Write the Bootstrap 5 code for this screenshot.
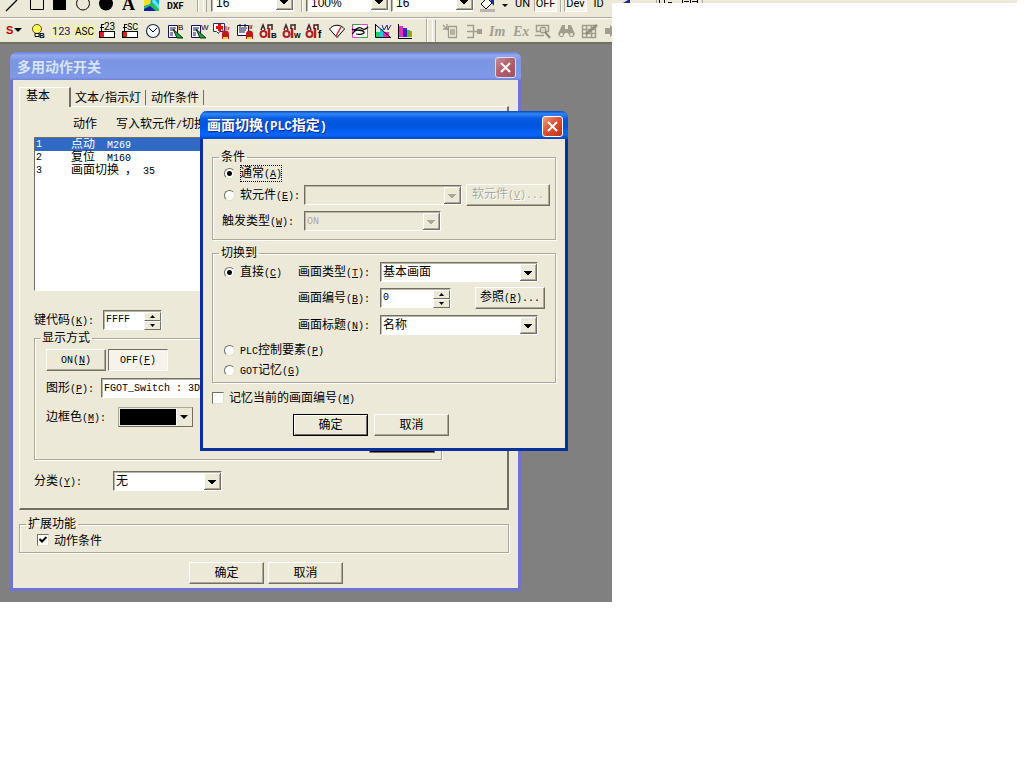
<!DOCTYPE html>
<html lang="zh-CN">
<head>
<meta charset="utf-8">
<meta name="viewport" content="width=device-width, initial-scale=1">
<title>多用动作开关</title>
<link href="https://cdn.jsdelivr.net/npm/bootstrap@5.3.0/dist/css/bootstrap.min.css" rel="stylesheet">
<style>
  :root { --face: #ece9d8; --edge: #716f64; --soft: #aca899; }
  body { background: #fff; color: #000; font: 12px/14px "Liberation Sans", "Noto Sans CJK SC", sans-serif; }
  .app { max-width: 612px; }
  .strip { height: 3px; background: var(--face); margin-right: 7px; overflow: hidden; }

  /* toolbars */
  .bar { background: var(--face); overflow: hidden; white-space: nowrap; }
  .bar-top { height: 17px; padding-bottom: 5px; }
  .bar-main { height: 27px; border-top: 1px solid var(--soft); box-shadow: inset 0 1px #fff; border-bottom: 2px solid #716f64; padding: 2px 0 0 4px; }
  .tool { width: 23px; height: 20px; padding: 0; border: 0; background: none; flex: none; line-height: 0; }
  .tool svg { width: 23px; height: 20px; }
  .word { border: 0; background: none; padding: 0; height: 20px; width: 23px; flex: none; font: 11px/24px Roboto, sans-serif; color: #000; }
  .word.on { background: #f6f5ee; border: 1px solid; border-color: var(--soft) #fff #fff var(--soft); line-height: 22px; }
  .grip { width: 4px; height: 22px; border-left: 1px solid #fff; border-right: 1px solid var(--soft); flex: none; }
  .rule { width: 2px; height: 24px; border-left: 1px solid var(--soft); border-right: 1px solid #fff; flex: none; }
  .bar-top .rule { margin: 0 3px 0 7px; }
  .bar-top .rule.far { margin: 0 4px 0 13px; }

  /* windows */
  .work { background: #808080; padding: 8px 10px 11px; }
  .win { background: var(--face); border: 3px solid; border-top: 0; border-radius: 7px 7px 0 0; }
  .win-back { border-color: #6c74cf; width: 511px; max-width: 100%; }
  .win-front { border-color: #0831a0; width: 368px; left: 200px; top: 111px; }
  .cap { height: 28px; margin: 0 -3px; padding: 0 5px 0 7px; border-radius: 7px 7px 0 0; color: #fff; }
  .cap h1 { font: bold 14px/20px "Liberation Mono", "Noto Sans CJK SC", monospace; margin: 0; padding-top: 3px; }
  .cap h1 .la { font-size: 12px; }
  .win-back .cap { background: linear-gradient(#6d80d8, #92a9ee 12%, #7b95e4 30%, #7b97e6 70%, #8199e8 90%, #6f83d6); color: #d8e4f8; }
  .win-front .cap { background: linear-gradient(#0848c0, #2f87f4 10%, #0558e2 28%, #0355e0 55%, #0666fa 85%, #0447c6); text-shadow: 1px 1px #0a2a80; }
  .shut { width: 21px; height: 21px; padding: 0; margin-top: 2px; border: 1px solid #fff; border-radius: 3px; background: linear-gradient(135deg, #f0a084, #dc5434 45%, #bd3212); line-height: 0; }
  .win-back .shut { background: linear-gradient(135deg, #c8909c, #b3606a 45%, #a05068); border-color: #d4dcf8; }

  /* text */
  .la, .fld, .spin input { font-family: "Liberation Mono", "Noto Sans CJK SC", monospace; }
  .la { font-size: 10px; }
  .win label, .win legend { font-weight: 400; line-height: 14px; white-space: nowrap; }
  .win label { padding-top: 1px; }

  /* controls */
  .fld { height: 20px; border: 1px solid; border-color: var(--edge) #fff #fff var(--edge); border-radius: 0; box-shadow: inset 1px 1px #b8b5a5; background: #fff; padding: 1px 2px 0; font-size: 12px; line-height: 16px; color: #000; }
  .fld.en, .spin input.en { font-size: 10px; }
  select.fld { appearance: none; background: #fff url("data:image/svg+xml,%3Csvg xmlns='http://www.w3.org/2000/svg' width='17' height='17' shape-rendering='crispEdges'%3E%3Cpath fill='%23716f64' d='M0 0h17v17H0z'/%3E%3Cpath fill='%23fff' d='M0 0h16v16H0z'/%3E%3Cpath fill='%23ece9d8' d='M1 1h15v15H1z'/%3E%3Cpath fill='%23aca899' d='M15 1h1v15H1v-1h14z'/%3E%3Cpath d='M4 7h8v1H4zM5 8h6v1H5zM6 9h4v1H6zM7 10h2v1H7z'/%3E%3C/svg%3E") no-repeat right 0 top 1px; }
  select.fld:disabled { opacity: 1; color: var(--soft); background: var(--face) url("data:image/svg+xml,%3Csvg xmlns='http://www.w3.org/2000/svg' width='17' height='17' shape-rendering='crispEdges'%3E%3Cpath fill='%23716f64' d='M0 0h17v17H0z'/%3E%3Cpath fill='%23fff' d='M0 0h16v16H0z'/%3E%3Cpath fill='%23ece9d8' d='M1 1h15v15H1z'/%3E%3Cpath fill='%23aca899' d='M15 1h1v15H1v-1h14zM4 7h8v1H4zM5 8h6v1H5zM6 9h4v1H6zM7 10h2v1H7z'/%3E%3C/svg%3E") no-repeat right 0 top 1px; }
  .bar select.fld { border-top: 0; flex: none; width: 83px; font: 12px/16px "Liberation Sans", sans-serif; padding: 2px 4px 0; }
  .spin { height: 20px; border: 1px solid; border-color: var(--edge) #fff #fff var(--edge); box-shadow: inset 1px 1px #b8b5a5; background: #fff; padding: 1px 0 0 1px; }
  .spin input { border: 0; background: none; padding: 0 1px; min-width: 0; font-size: 10px; line-height: 14px; height: 15px; }
  .spin button { width: 17px; height: 9px; padding: 0; border: 1px solid; border-color: #fff var(--edge) var(--edge) #fff; background: var(--face); line-height: 0; display: block; }
  .push { height: 22px; border: 1px solid; border-color: #fff var(--edge) var(--edge) #fff; box-shadow: inset -1px -1px var(--soft); border-radius: 0; background: var(--face); color: #000; padding: 0; font-size: 12px; line-height: 18px; white-space: nowrap; }
  .push-w { width: 75px; }
  .push.first { border-color: #000; box-shadow: inset 1px 1px #fff, inset -1px -1px var(--edge); }
  .push.down { border-color: var(--edge) #fff #fff var(--edge); box-shadow: none; background: #f5f3ea; }
  .push:disabled { color: var(--soft); text-shadow: 1px 1px #fff; }
  .swatch { width: 75px; height: 20px; border: 1px solid; border-color: var(--soft) var(--edge) var(--edge) var(--soft); background: var(--face); padding: 1px; }
  .swatch i { background: #000; }
  .win input[type=radio], .win input[type=checkbox] { appearance: none; flex: none; margin: 0; background: #fff; border: 1px solid; border-color: var(--edge) #e4e0cc #e4e0cc var(--edge); }
  .win input[type=radio] { width: 11px; height: 11px; border-radius: 50%; margin: 0 5px; }
  .win input[type=radio]:checked { background: #fff radial-gradient(circle, #000 2px, #fff 3px); }
  .win input[type=checkbox] { width: 12px; height: 12px; margin-right: 5px; }
  .win input[type=checkbox]:checked { background: #fff url("data:image/svg+xml,%3Csvg xmlns='http://www.w3.org/2000/svg' width='10' height='10'%3E%3Cpath fill='none' stroke='%23000' stroke-width='2' d='M1.5 4l2.500 2.500L8.500 2'/%3E%3C/svg%3E"); }
  .box { border: 1px solid var(--soft); box-shadow: 1px 1px #fff, inset 1px 1px #fff; padding: 0 5px 4px 6px; margin: 0; min-width: 0; }
  .box.when { padding-bottom: 5px; }
  .box legend { float: none; width: auto; font-size: 12px; height: 14px; margin: 0; padding: 0 2px; }
  .focus { outline: 1px dotted #000; outline-offset: -1px; }
  .h-16 { height: 16px; } .h-18 { height: 18px; } .h-24 { height: 24px; } .h-26 { height: 26px; } .h-28 { height: 28px; }
  .w-radio { width: 79px; flex: none; }
  .w-lab { width: 82px; flex: none; }
  .w-158 { width: 158px; }

  /* tabs and list */
  .body-back { padding: 7px 9px 4px 6px; }
  .body-front { padding: 11px 9px 12px; }
  .tabs { height: 19px; }
  .tabs button { border: 0; background: none; padding: 1px 4px 0; font-size: 12px; line-height: 14px; border-right: 1px solid var(--edge); height: 15px; margin-top: 3px; }
  .tabs button + button + button { padding-left: 5px; }
  .tabs button.cur { height: 20px; width: 52px; margin: 0 0 -1px; padding: 0 0 4px 6px; text-align: left; border: 1px solid #fff; border-right: 2px solid var(--edge); border-bottom: 0; background: var(--face); position: relative; }
  .sheet { border: 1px solid #fff; border-right: 2px solid var(--edge); border-bottom: 2px solid var(--edge); padding: 0 65px 17px 14px; }
  .heads { height: 30px; padding: 10px 0 0 39px; gap: 19px; }
  .list { height: 154px; border: 1px solid; border-color: var(--edge) #fff #fff var(--edge); background: #fff; }
  .list table { width: 100%; }
  .list td { height: 13px; line-height: 11px; padding: 0; white-space: nowrap; }
  .list td:first-child { width: 36px; padding-left: 1px; }
  .list .sel { background: #316ac5; color: #fff; }
  .keys { height: 20px; margin-top: 19px; margin-bottom: 1px; }
  .look { padding: 4px 6px 6px 11px; }
  .r-img { margin-top: 7px; } .r-col { margin-top: 9px; } .r-fill { margin-top: 6px; }
  .r-cat { margin-top: 11px; }
  .ext { margin-top: 7px; padding: 0 5px 3px 17px; }
  .ext legend { margin-left: -11px; }
  .ends { margin-top: 9px; padding-left: 4px; }
</style>
</head>
<body>
<div class="d-flex align-items-start">
<main class="app w-100 position-relative overflow-hidden flex-shrink-0">

  <div class="bar bar-top d-flex align-items-end" role="toolbar" aria-label="绘图">
    <button class="tool" aria-label="直线"><svg viewBox="0 0 23 20"><path d="M6 19L17 8" stroke="#000" stroke-width="1.300"/></svg></button>
    <button class="tool" aria-label="矩形"><svg viewBox="0 0 23 20"><path d="M7.500 5.500h13v12h-13z" fill="none" stroke="#000"/></svg></button>
    <button class="tool" aria-label="填充矩形"><svg viewBox="0 0 23 20"><path d="M7 5h13v13H7z"/></svg></button>
    <button class="tool" aria-label="圆"><svg viewBox="0 0 23 20"><circle cx="14" cy="11.500" r="6.500" fill="none" stroke="#000"/></svg></button>
    <button class="tool" aria-label="填充圆"><svg viewBox="0 0 23 20"><circle cx="14" cy="11.500" r="7"/></svg></button>
    <button class="tool" aria-label="文本"><svg viewBox="0 0 23 20"><text x="7" y="18" font-family="Liberation Serif" font-weight="bold" font-size="18">A</text></svg></button>
    <button class="tool" aria-label="图像"><svg viewBox="0 0 23 20"><path fill="#00a0e0" d="M6 3h15v16H6z"/><path fill="#ffe020" d="M6 3h8l-2 9-6 2z"/><path fill="#20c060" d="M6 15l8-4 7 5v3H6z"/><path fill="#1020a0" d="M12 14l6 5H6v-2z"/><path fill="#60e8f8" d="M15 5l6 8v4l-7-7z"/></svg></button>
    <button class="tool" aria-label="DXF"><svg viewBox="0 0 23 20"><text x="6" y="17" font-family="Roboto" font-weight="bold" font-size="9">DXF</text></svg></button>
    <span class="rule far"></span><span class="grip me-1"></span>
    <select class="fld" aria-label="字号"><option>16</option></select>
    <span class="rule"></span>
    <select class="fld" aria-label="缩放"><option>100%</option></select>
    <select class="fld" style="margin-left:2px" aria-label="网格"><option>16</option></select>
    <button class="tool" style="margin-left:3px" aria-label="填充色"><svg viewBox="0 0 23 20"><path d="M4 12l6-6 5 5-6 6z" fill="#fff" stroke="#000"/><path fill="#1828a0" d="M12 4l5 2v8l-3-4z"/><path fill="#b8b5b0" d="M3 17h15v3H3z"/></svg></button>
    <button class="tool" style="width:11px" aria-label="更多"><svg viewBox="0 0 23 20" style="width:23px"><path d="M2 12h6l-3 3z"/></svg></button>
    <button class="word">UN</button>
    <button class="word on">OFF</button>
    <span class="rule" style="margin:0 2px 0 3px"></span>
    <button class="word on">Dev</button>
    <button class="word">ID</button>
  </div>

  <div class="bar bar-main d-flex align-items-center" role="toolbar" aria-label="对象">
    <button class="tool" aria-label="S"><svg viewBox="0 0 23 20"><text x="2" y="13" font-family="Liberation Sans" font-weight="bold" font-size="11" fill="#c00000">S</text><path d="M10 7h8l-4 4z"/></svg></button>
    <button class="tool" aria-label="指示灯"><svg viewBox="0 0 23 20"><circle cx="10" cy="8" r="4.500" fill="#ffff60" stroke="#605000"/><path fill="#fff" stroke="#000" d="M8 12.500h4v3H8z"/><text x="12" y="17" font-family="Liberation Sans" font-weight="bold" font-size="8">B</text></svg></button>
    <button class="tool" aria-label="数值"><svg viewBox="0 0 23 20"><path fill="#f3f0b8" d="M1 3h21v14H1z"/><text x="2" y="14" font-family="Roboto" font-size="11" fill="#101080">123</text></svg></button>
    <button class="tool" aria-label="字符"><svg viewBox="0 0 23 20"><path fill="#f3f0b8" d="M1 3h21v14H1z"/><text x="2" y="14" font-family="Roboto" font-size="10">ASC</text></svg></button>
    <button class="tool" aria-label="数值输入"><svg viewBox="0 0 23 20" shape-rendering="crispEdges"><text x="8" y="9" font-family="Roboto" font-size="10">23</text><path fill="none" stroke="#000" d="M5.500 10V3.500H8M4 6.500h4"/><path fill="#fff" stroke="#000" d="M3.500 10.500h15v6h-15z"/><path fill="#e02020" d="M4 11h4v5H4z"/></svg></button>
    <button class="tool" aria-label="字符输入"><svg viewBox="0 0 23 20" shape-rendering="crispEdges"><text x="8" y="9" font-family="Roboto" font-size="9">SC</text><path fill="none" stroke="#000" d="M5.500 10V3.500H8M4 6.500h4"/><path fill="#fff" stroke="#000" d="M3.500 10.500h15v6h-15z"/><path fill="#e02020" d="M4 11h4v5H4z"/></svg></button>
    <button class="tool" aria-label="时钟"><svg viewBox="0 0 23 20"><circle cx="11" cy="10" r="6.500" fill="#f4fbff" stroke="#203050" stroke-width="1.200"/><path d="M7 7l4 4 4-4" fill="none" stroke="#000"/></svg></button>
    <button class="tool" aria-label="注释B"><svg viewBox="0 0 23 20"><path fill="#fff" stroke="#101060" d="M3.500 4.500h9v12h-9z"/><path stroke="#101060" d="M5 7h6M5 9h5M5 12h3M5 14h3"/><path fill="#20a040" stroke="#103010" d="M8 8l10 9h-6z"/><text x="13" y="9" font-family="Liberation Sans" font-size="8">B</text></svg></button>
    <button class="tool" aria-label="注释W"><svg viewBox="0 0 23 20"><path fill="#fff" stroke="#101060" d="M3.500 4.500h9v12h-9z"/><path stroke="#101060" d="M5 7h6M5 9h5M5 12h3M5 14h3"/><path fill="#20a040" stroke="#103010" d="M8 8l10 9h-6z"/><text x="13" y="9" font-family="Liberation Sans" font-size="8">W</text></svg></button>
    <button class="tool" aria-label="报警历史"><svg viewBox="0 0 23 20"><path fill="#fff" stroke="#203070" d="M2.500 2.500h11v8h-5l-1 2-2-2h-3z"/><path fill="#e01010" d="M7 3h3v2h2v3h-2v2H7V8H5V5h2z"/><path fill="#c01818" d="M11 18v-5a3.500 3.500 0 017 0v5z"/><path fill="#f0d020" d="M12 16h5v2h-5z"/><path d="M11 8l2 3M15 5v4M18 6l-1 3" stroke="#c01818"/></svg></button>
    <button class="tool" aria-label="报警列表"><svg viewBox="0 0 23 20"><path fill="#fff" stroke="#101040" d="M3.500 4.500h11v10h-11z"/><path stroke="#101040" d="M5 7h8M5 9h7M5 11h6M6 3v3M11 3v3"/><path fill="#c01818" d="M12 18v-5a3.500 3.500 0 017 0v5z"/><path fill="#f0d020" d="M13 16h5v2h-5z"/><path d="M16 4v4M18 4l-1 4" stroke="#c01818"/></svg></button>
    <button class="tool" aria-label="部件B"><svg viewBox="0 0 23 20"><circle cx="6.500" cy="13" r="3" fill="none" stroke="#b02020" stroke-width="2"/><path d="M12 7v10" stroke="#b02020" stroke-width="2.500"/><path d="M4 9l2-5 2 5M11 8V4h4M15 9V3" fill="none" stroke="#402020" stroke-width="1.500"/><text x="14" y="17" font-family="Liberation Sans" font-size="8" font-weight="bold">B</text></svg></button>
    <button class="tool" aria-label="部件W"><svg viewBox="0 0 23 20"><circle cx="6.500" cy="13" r="3" fill="none" stroke="#b02020" stroke-width="2"/><path d="M12 7v10" stroke="#b02020" stroke-width="2.500"/><path d="M4 9l2-5 2 5M11 8V4h4M15 9V3" fill="none" stroke="#402020" stroke-width="1.500"/><text x="14" y="17" font-family="Liberation Sans" font-size="7" font-weight="bold">W</text></svg></button>
    <button class="tool" aria-label="部件f"><svg viewBox="0 0 23 20"><circle cx="6.500" cy="13" r="3" fill="none" stroke="#b02020" stroke-width="2"/><path d="M12 7v10" stroke="#b02020" stroke-width="2.500"/><path d="M4 9l2-5 2 5M11 8V4h4M15 9V3" fill="none" stroke="#402020" stroke-width="1.500"/><text x="15" y="17" font-family="Liberation Sans" font-size="10" font-weight="bold">f</text></svg></button>
    <button class="tool" aria-label="仪表"><svg viewBox="0 0 23 20"><path d="M3.500 8C7 3 15 3 18.500 8L11 16.500z" fill="#fff" stroke="#000"/><path d="M10 15l5-9" stroke="#e02020" stroke-width="1.500"/></svg></button>
    <button class="tool" aria-label="趋势图"><svg viewBox="0 0 23 20"><path fill="#fff" stroke="#e040d0" d="M3.500 3.500h15v13h-15z"/><path d="M3 8c3 3 6-3 9-1s4 2 7-1M3 13c2-1 2-4 5-4s6 0 7 2-5 3-8 2" fill="none" stroke="#000" stroke-width="1.300"/><path stroke="#20b040" d="M3 3.500h8M11 16.500h8"/></svg></button>
    <button class="tool" aria-label="折线图"><svg viewBox="0 0 23 20"><path fill="#20d060" d="M4 11h4v5H4z"/><path fill="#20c8e0" d="M8 8h3v8H8z"/><path fill="#e030c0" d="M11 11h6v5h-6z"/><path d="M3.500 3v13.500H19M4 4l14 12" fill="none" stroke="#000"/><path d="M10 4l2 5 3-5 1 5 3-5" fill="none" stroke="#3020a0"/></svg></button>
    <button class="tool" aria-label="柱状图"><svg viewBox="0 0 23 20" shape-rendering="crispEdges"><path d="M3 3v14h14" fill="none" stroke="#000"/><path fill="#e030c0" d="M4 5h4v11H4z"/><path fill="#4020c0" d="M8 7h4v9H8z"/><path fill="#40c040" d="M12 9h3v7h-3z"/><path fill="#c09020" d="M15 10h2v6h-2z"/></svg></button>
    <span class="rule ms-2 me-1"></span><span class="grip me-1"></span>
    <button class="tool" aria-label="列表"><svg viewBox="0 0 23 20"><path d="M8.500 5.500h8v11h-8zM10 9h5M10 11h5M10 13h5M3 4l6 6M3 8h5M7 3v5" fill="none" stroke="#a19e8f" stroke-width="1.300"/></svg></button>
    <button class="tool" aria-label="分支"><svg viewBox="0 0 23 20"><path d="M4 4.500h7M4 10.500h10M4 16.500h7M10.500 4v12M14 10.500h5" fill="none" stroke="#a19e8f" stroke-width="1.500"/><path fill="#a19e8f" d="M14 8h5v5h-5z"/></svg></button>
    <button class="tool" aria-label="导入"><svg viewBox="0 0 23 20"><text x="3" y="15" font-family="Liberation Serif" font-style="italic" font-weight="bold" font-size="14" fill="#a19e8f">Im</text></svg></button>
    <button class="tool" aria-label="导出"><svg viewBox="0 0 23 20"><text x="4" y="15" font-family="Liberation Serif" font-style="italic" font-weight="bold" font-size="14" fill="#a19e8f">Ex</text></svg></button>
    <button class="tool" aria-label="预览"><svg viewBox="0 0 23 20"><path d="M4.500 4.500h12v6h-12zM3 14.500h9" fill="none" stroke="#a19e8f" stroke-width="1.500"/><circle cx="11" cy="9" r="3" fill="#d8d4c4" stroke="#8f8c7d"/><path d="M13 11l5 6" stroke="#8f8c7d" stroke-width="2"/></svg></button>
    <button class="tool" aria-label="查找"><svg viewBox="0 0 23 20"><path fill="#a19e8f" d="M7 4h3v4h3V4h3l4 9-2 3h-3l-2-4h-3l-2 4H5l-2-3z"/><circle cx="6.500" cy="13.500" r="1.500" fill="#ece9d8"/><circle cx="16.500" cy="13.500" r="1.500" fill="#ece9d8"/></svg></button>
    <button class="tool" aria-label="网格"><svg viewBox="0 0 23 20"><path d="M4.500 4.500h13v12h-13zM4 8.500h14M4 12.500h14M8.500 4v13M13.500 4v13" fill="none" stroke="#a19e8f" stroke-width="1.500"/><path d="M8 13L19 4" stroke="#8f8c7d" stroke-width="2.500"/></svg></button>
    <button class="tool" aria-label="前进"><svg viewBox="0 0 23 20"><path fill="#a19e8f" d="M4 7h5V4l7 6-7 6v-3H4z"/></svg></button>
  </div>

  <div class="work">
    <section class="win win-back" aria-label="多用动作开关">
      <header class="cap d-flex align-items-center justify-content-between">
        <h1>多用动作开关</h1>
        <button class="shut" aria-label="关闭"><svg width="19" height="19"><path d="M5 5l9 9M14 5l-9 9" stroke="#fff" stroke-width="2"/></svg></button>
      </header>
      <div class="body-back">
        <nav class="tabs d-flex">
          <button class="cur">基本</button>
          <button>文本<span class="la">/</span>指示灯</button>
          <button>动作条件</button>
        </nav>
        <div class="sheet">
          <div class="heads d-flex"><span>动作</span><span>写入软元件<span class="la">/</span>切换</span></div>
          <div class="list overflow-hidden">
            <table>
              <tr class="sel"><td class="la">1</td><td>点动<span class="la">&nbsp;&nbsp;M269</span></td></tr>
              <tr><td class="la">2</td><td>复位<span class="la">&nbsp;&nbsp;M160</span></td></tr>
              <tr><td class="la">3</td><td>画面切换<span class="la">&nbsp;</span>，<span class="la">&nbsp;35</span></td></tr>
            </table>
          </div>
          <div class="keys d-flex align-items-center">
            <label for="key" style="width:69px">键代码<span class="la">(<u>K</u>):</span></label>
            <div class="spin d-flex" style="width:59px">
              <input id="key" class="flex-grow-1" value="FFFF">
              <div><button aria-label="增加"><svg width="15" height="7"><path d="M5 5h5L7.500 2z"/></svg></button><button aria-label="减少"><svg width="15" height="7"><path d="M5 2h5L7.500 5z"/></svg></button></div>
            </div>
          </div>
          <fieldset class="box look">
            <legend style="margin-left:-6px">显示方式</legend>
            <div class="d-flex" style="gap:2px">
              <button class="push" style="width:60px"><span class="la">ON(<u>N</u>)</span></button>
              <button class="push down" style="width:60px"><span class="la">OFF(<u>F</u>)</span></button>
            </div>
            <div class="d-flex align-items-center r-img">
              <label for="shape" style="width:55px">图形<span class="la">(<u>P</u>):</span></label>
              <input id="shape" class="fld en flex-grow-1" value="FGOT_Switch : 3D">
            </div>
            <div class="d-flex align-items-center r-col">
              <label for="edge" style="width:72px">边框色<span class="la">(<u>M</u>):</span></label>
              <button id="edge" class="swatch d-flex"><i class="flex-grow-1 h-100"></i><svg width="15" height="16"><path d="M.5 0v16" stroke="#fff"/><path d="M4 6h8l-4 4z"/></svg></button>
            </div>
            <div class="d-flex justify-content-end r-fill"><button class="swatch d-flex" style="width:66px;padding:0" aria-label="底色"><i class="flex-grow-1 h-100"></i></button></div>
          </fieldset>
          <div class="d-flex align-items-center r-cat">
            <label for="cat" style="width:79px">分类<span class="la">(<u>Y</u>):</span></label>
            <select id="cat" class="fld" style="width:109px"><option>无</option></select>
          </div>
        </div>
        <fieldset class="box ext">
          <legend>扩展功能</legend>
          <div class="d-flex align-items-center h-18"><input type="checkbox" id="cond" checked><label for="cond">动作条件</label></div>
        </fieldset>
        <div class="d-flex justify-content-center gap-1 ends">
          <button class="push push-w">确定</button><button class="push push-w">取消</button>
        </div>
      </div>
    </section>
  </div>

  <section class="win win-front position-absolute" role="dialog" aria-label="画面切换(PLC指定)">
    <header class="cap d-flex align-items-center justify-content-between">
      <h1>画面切换<span class="la">(PLC</span>指定<span class="la">)</span></h1>
      <button class="shut" aria-label="关闭"><svg width="19" height="19"><path d="M5 5l9 9M14 5l-9 9" stroke="#fff" stroke-width="2"/></svg></button>
    </header>
    <div class="body-front">
      <fieldset class="box when">
        <legend>条件</legend>
        <div class="d-flex align-items-center h-18"><input type="radio" name="c" id="c1" checked><label for="c1" class="focus">通常<span class="la">(<u>A</u>)</span></label></div>
        <div class="d-flex align-items-center h-26">
          <input type="radio" name="c" id="c2"><label for="c2" style="width:64px">软元件<span class="la">(<u>E</u>):</span></label>
          <select class="fld w-158" disabled aria-label="软元件"><option></option></select>
          <button class="push ms-auto" style="width:84px" disabled>软元件<span class="la">(<u>V</u>)...</span></button>
        </div>
        <div class="d-flex align-items-center h-26">
          <label for="trig" style="width:82px;margin-left:3px">触发类型<span class="la">(<u>W</u>):</span></label>
          <select id="trig" class="fld en" style="width:137px" disabled><option>ON</option></select>
        </div>
      </fieldset>
      <fieldset class="box" style="margin-top:6px">
        <legend>切换到</legend>
        <div class="d-flex align-items-center h-24">
          <div class="w-radio d-flex align-items-center"><input type="radio" name="t" id="t1" checked><label for="t1">直接<span class="la">(<u>C</u>)</span></label></div>
          <label for="type" class="w-lab">画面类型<span class="la">(<u>T</u>):</span></label>
          <select id="type" class="fld w-158"><option>基本画面</option></select>
        </div>
        <div class="d-flex align-items-center h-28">
          <div class="w-radio"></div>
          <label for="num" class="w-lab">画面编号<span class="la">(<u>B</u>):</span></label>
          <div class="spin d-flex" style="width:71px">
            <input id="num" class="flex-grow-1" value="0">
            <div><button aria-label="增加"><svg width="15" height="7"><path d="M5 5h5L7.500 2z"/></svg></button><button aria-label="减少"><svg width="15" height="7"><path d="M5 2h5L7.500 5z"/></svg></button></div>
          </div>
          <button class="push ms-4" style="width:70px">参照<span class="la">(<u>R</u>)...</span></button>
        </div>
        <div class="d-flex align-items-center h-26">
          <div class="w-radio"></div>
          <label for="ttl" class="w-lab">画面标题<span class="la">(<u>N</u>):</span></label>
          <select id="ttl" class="fld w-158"><option>名称</option></select>
        </div>
        <div class="d-flex align-items-center h-24"><input type="radio" name="t" id="t2"><label for="t2"><span class="la">PLC</span>控制要素<span class="la">(<u>P</u>)</span></label></div>
        <div class="d-flex align-items-center h-16"><input type="radio" name="t" id="t3"><label for="t3"><span class="la">GOT</span>记忆<span class="la">(<u>G</u>)</span></label></div>
      </fieldset>
      <div class="d-flex align-items-center h-18" style="margin-top:6px"><input type="checkbox" id="rem"><label for="rem">记忆当前的画面编号<span class="la">(<u>M</u>)</span></label></div>
      <div class="d-flex justify-content-center" style="gap:6px;margin-top:7px;padding-right:26px">
        <button class="push push-w first">确定</button><button class="push push-w">取消</button>
      </div>
    </div>
  </section>
</main>
<div class="strip flex-grow-1"><svg width="100" height="3" class="d-block"><path d="M11 3l5-3h2v3z" fill="#202880"/><path d="M44.500 0v3M90.500 0v3" stroke="#aca899"/><path d="M47 0h1v3h-1zM52 0h1v3h-1zM56 2h4v1h-4zM70 0h1v3h-1zM72 1h5v1h-5zM78 0h1v3h-1zM80 1h5v1h-5zM85 0h1v3h-1z"/></svg></div>
</div>
<script src="https://cdn.jsdelivr.net/npm/bootstrap@5.3.0/dist/js/bootstrap.bundle.min.js"></script>
</body>
</html>
